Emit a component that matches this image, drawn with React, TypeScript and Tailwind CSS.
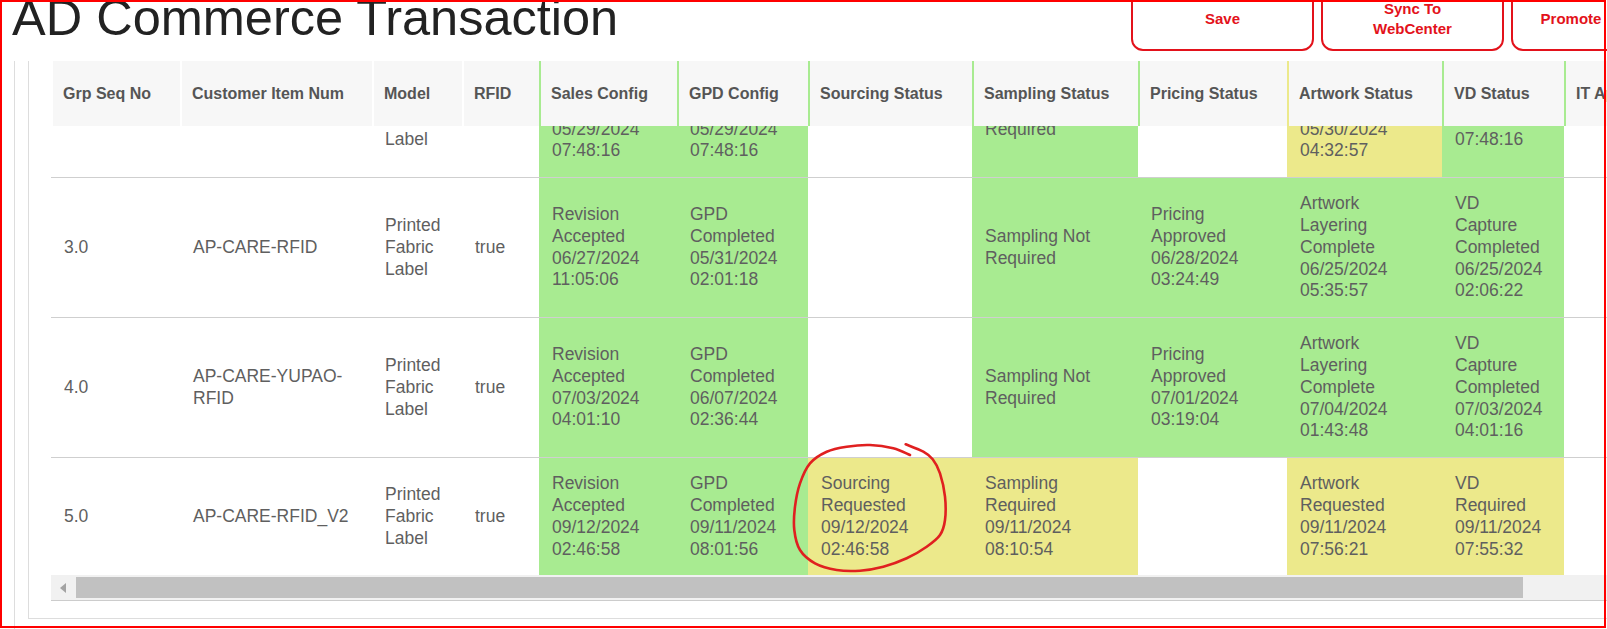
import React from "react";

type Tone = "w" | "g" | "y";
type Cell = { lines: string[]; tone?: Tone };

const cols = [
  { label: "Grp Seq No", w: "w-[129px]", edge: "border-l-white" },
  { label: "Customer Item Num", w: "w-[192px]", edge: "border-l-white" },
  { label: "Model", w: "w-[90px]", edge: "border-l-white" },
  { label: "RFID", w: "w-[77px]", edge: "border-l-white" },
  { label: "Sales Config", w: "w-[138px]", edge: "border-l-[#a8eb91]" },
  { label: "GPD Config", w: "w-[131px]", edge: "border-l-[#a8eb91]" },
  { label: "Sourcing Status", w: "w-[164px]", edge: "border-l-[#a8eb91]" },
  { label: "Sampling Status", w: "w-[166px]", edge: "border-l-[#a8eb91]" },
  { label: "Pricing Status", w: "w-[149px]", edge: "border-l-[#a8eb91]" },
  { label: "Artwork Status", w: "w-[155px]", edge: "border-l-[#ece98b]" },
  { label: "VD Status", w: "w-[122px]", edge: "border-l-[#a8eb91]" },
  { label: "IT Approval Status", w: "w-[170px]", edge: "border-l-[#a8eb91]" },
];

const bg: Record<Tone, string> = {
  w: "bg-white",
  g: "bg-[#a8eb91]",
  y: "bg-[#ece98b]",
};

const t = (...lines: string[]): Cell => ({ lines });
const g = (...lines: string[]): Cell => ({ lines, tone: "g" });
const y = (...lines: string[]): Cell => ({ lines, tone: "y" });
const empty: Cell = { lines: [] };

const rows: Cell[][] = [
  [
    t("2.0"),
    t("AP-CARE"),
    t("Printed", "Fabric", "Label"),
    t("true"),
    g("Revision", "Accepted", "05/29/2024", "07:48:16"),
    g("GPD", "Completed", "05/29/2024", "07:48:16"),
    empty,
    g("Sampling Not", "Required"),
    empty,
    y("Artwork", "Requested", "05/30/2024", "04:32:57"),
    g("Completed", "05/29/2024", "07:48:16"),
    empty,
  ],
  [
    t("3.0"),
    t("AP-CARE-RFID"),
    t("Printed", "Fabric", "Label"),
    t("true"),
    g("Revision", "Accepted", "06/27/2024", "11:05:06"),
    g("GPD", "Completed", "05/31/2024", "02:01:18"),
    empty,
    g("Sampling Not", "Required"),
    g("Pricing", "Approved", "06/28/2024", "03:24:49"),
    g("Artwork", "Layering", "Complete", "06/25/2024", "05:35:57"),
    g("VD", "Capture", "Completed", "06/25/2024", "02:06:22"),
    empty,
  ],
  [
    t("4.0"),
    t("AP-CARE-YUPAO-", "RFID"),
    t("Printed", "Fabric", "Label"),
    t("true"),
    g("Revision", "Accepted", "07/03/2024", "04:01:10"),
    g("GPD", "Completed", "06/07/2024", "02:36:44"),
    empty,
    g("Sampling Not", "Required"),
    g("Pricing", "Approved", "07/01/2024", "03:19:04"),
    g("Artwork", "Layering", "Complete", "07/04/2024", "01:43:48"),
    g("VD", "Capture", "Completed", "07/03/2024", "04:01:16"),
    empty,
  ],
  [
    t("5.0"),
    t("AP-CARE-RFID_V2"),
    t("Printed", "Fabric", "Label"),
    t("true"),
    g("Revision", "Accepted", "09/12/2024", "02:46:58"),
    g("GPD", "Completed", "09/11/2024", "08:01:56"),
    y("Sourcing", "Requested", "09/12/2024", "02:46:58"),
    y("Sampling", "Required", "09/11/2024", "08:10:54"),
    empty,
    y("Artwork", "Requested", "09/11/2024", "07:56:21"),
    y("VD", "Required", "09/11/2024", "07:55:32"),
    empty,
  ],
];

// hand drawn circle round the sourcing cell
const loop: [number, number][] = [
  [905.7, 444.3], [923.3, 451.7], [932.7, 459.3], [940, 473.3], [945, 496.7],
  [945, 520], [940, 535], [926.7, 546.7], [906.7, 558.3], [883.3, 566.7],
  [860, 570.7], [836.7, 570], [815, 563.3], [800, 550], [794.3, 530],
  [795, 506.7], [800, 483.3], [810, 463.3], [826.7, 451.7], [846.7, 446.7],
  [870, 445], [893.3, 448.3], [910, 455],
];

function smoothPath(pts: [number, number][]) {
  let d = `M${pts[0][0]} ${pts[0][1]}`;
  for (let i = 0; i < pts.length - 1; i++) {
    const p0 = pts[i - 1] || pts[i];
    const p1 = pts[i];
    const p2 = pts[i + 1];
    const p3 = pts[i + 2] || p2;
    const c1 = [p1[0] + (p2[0] - p0[0]) / 6, p1[1] + (p2[1] - p0[1]) / 6];
    const c2 = [p2[0] - (p3[0] - p1[0]) / 6, p2[1] - (p3[1] - p1[1]) / 6];
    d += ` C${c1[0]} ${c1[1]} ${c2[0]} ${c2[1]} ${p2[0]} ${p2[1]}`;
  }
  return d;
}

const App = () => {
  return (
    <div className="relative h-[629px] w-full overflow-hidden bg-white font-['Liberation_Sans',Arial,sans-serif]">
      {/* title bar */}
      <div className="flex h-[61px]">
        <div className="w-[1131px] shrink-0">
          <h1 className="ml-[12px] mt-[-7px] whitespace-nowrap text-[50.5px] leading-[50px] text-[#222]">
            AD Commerce Transaction
          </h1>
        </div>
        <div className="mt-[-13px] flex shrink-0 gap-[7px] text-[15px] font-bold leading-[20px] text-[#e3121b]">
          <button className="flex h-[64px] w-[183px] items-center justify-center rounded-[12px] border-2 border-[#e3121b]">
            Save
          </button>
          <button className="flex h-[64px] w-[183px] items-center justify-center rounded-[12px] border-2 border-[#e3121b]">
            Sync To
            <br />
            WebCenter
          </button>
          <button className="flex h-[64px] w-[120px] items-center justify-center rounded-[12px] border-2 border-[#e3121b]">
            Promote
          </button>
        </div>
      </div>

      {/* panels */}
      <div className="ml-[14px] h-[568px] border-l border-[#dddddd] pl-[13px]">
        <div className="h-[558px] w-[1700px] border-b border-l border-[#dddddd] pl-[22px]">
          <div className="relative h-[514px] overflow-hidden text-[17.5px] leading-[21.8px] text-[#5f5f5f]">
            {/* body, scrolled under the header */}
            <div className="mt-[-2px]">
              {rows.map((row, ri) => (
                <div key={ri} className="flex border-t border-[#cfcfcf]">
                  {row.map((cell, ci) => (
                    <div
                      key={ci}
                      className={`${cols[ci].w} ${bg[cell.tone || "w"]} flex shrink-0 flex-col justify-center px-[13px] py-[15px]`}
                    >
                      {cell.lines.map((l, li) => (
                        <span key={li} className="whitespace-nowrap">
                          {l}
                        </span>
                      ))}
                    </div>
                  ))}
                </div>
              ))}
            </div>

            {/* sticky header */}
            <div className="absolute left-0 top-0 z-10 flex h-[65px] text-[16px] font-bold text-[#555]">
              {cols.map((c) => (
                <div
                  key={c.label}
                  className={`${c.w} ${c.edge} flex shrink-0 items-center overflow-hidden whitespace-nowrap border-l-2 bg-[#f7f7f7] px-[10px]`}
                >
                  {c.label}
                </div>
              ))}
            </div>
          </div>

          {/* horizontal scrollbar */}
          <div className="flex h-[26px] border-b border-[#cccccc] bg-[#f1f1f1]">
            <div className="flex w-[25px] items-center justify-center">
              <svg width="7" height="10" viewBox="0 0 7 10">
                <path d="M6 0 L0 5 L6 10 Z" fill="#a3a3a3" />
              </svg>
            </div>
            <div className="mt-[2px] h-[21px] w-[1447px] bg-[#c1c1c1]" />
          </div>
        </div>
      </div>

      {/* annotation */}
      <svg
        className="pointer-events-none absolute left-0 top-0 z-20"
        width="1607"
        height="629"
      >
        <path
          d={smoothPath(loop)}
          fill="none"
          stroke="#e02020"
          strokeWidth="2.6"
          strokeLinecap="round"
          strokeLinejoin="round"
        />
      </svg>
      <div className="pointer-events-none absolute left-0 top-0 z-30 h-[628px] w-[1606px] border-2 border-[#ff0000]" />
    </div>
  );
};

export default App;
